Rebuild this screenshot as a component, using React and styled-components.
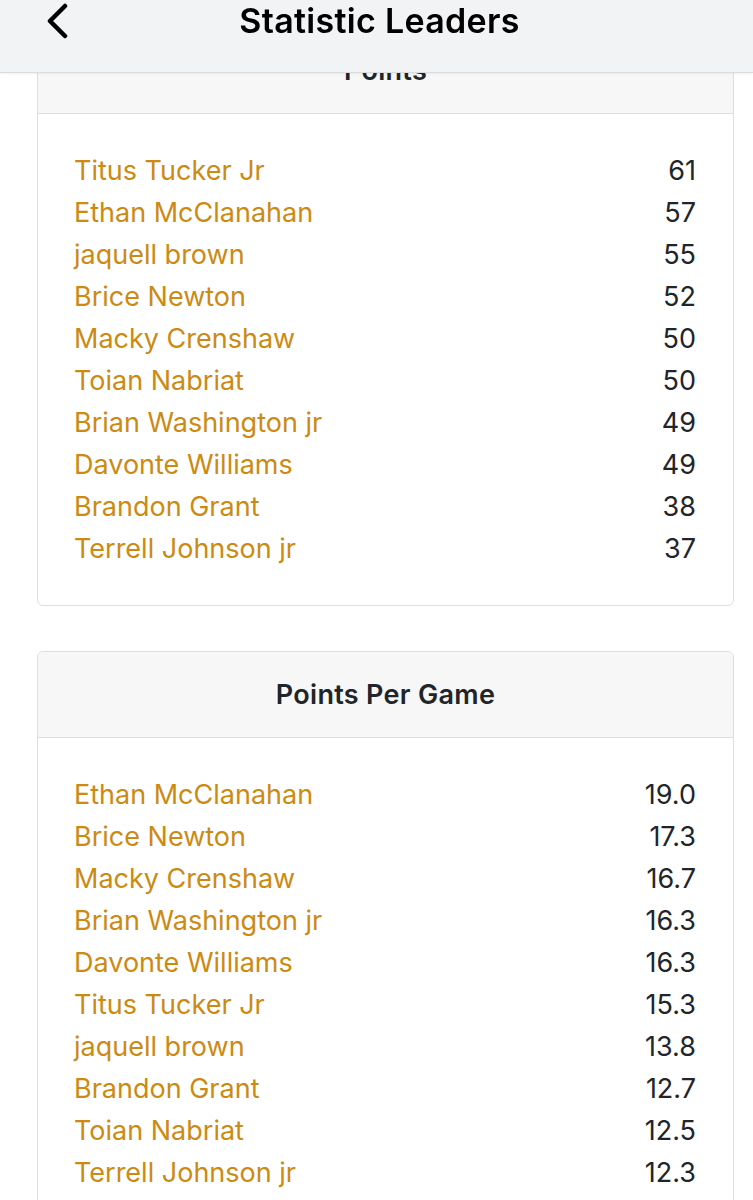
import React from 'react'
import styled, { createGlobalStyle } from 'styled-components'

const GlobalStyle = createGlobalStyle`
  html, body {
    margin: 0;
    padding: 0;
    background: #ffffff;
    font-family: Inter, "Noto Sans", sans-serif;
  }
`

const points = [
  ['Titus Tucker Jr', '61'],
  ['Ethan McClanahan', '57'],
  ['jaquell brown', '55'],
  ['Brice Newton', '52'],
  ['Macky Crenshaw', '50'],
  ['Toian Nabriat', '50'],
  ['Brian Washington jr', '49'],
  ['Davonte Williams', '49'],
  ['Brandon Grant', '38'],
  ['Terrell Johnson jr', '37'],
]

const ppg = [
  ['Ethan McClanahan', '19.0'],
  ['Brice Newton', '17.3'],
  ['Macky Crenshaw', '16.7'],
  ['Brian Washington jr', '16.3'],
  ['Davonte Williams', '16.3'],
  ['Titus Tucker Jr', '15.3'],
  ['jaquell brown', '13.8'],
  ['Brandon Grant', '12.7'],
  ['Toian Nabriat', '12.5'],
  ['Terrell Johnson jr', '12.3'],
]

function LeaderCard({ title, rows }) {
  return (
    <Card>
      <CardHeader>{title}</CardHeader>
      <CardBody>
        {rows.map(([name, value]) => (
          <Row key={name}>
            <Name href="#">{name}</Name>
            <Value>{value}</Value>
          </Row>
        ))}
      </CardBody>
    </Card>
  )
}

export default function App() {
  return (
    <>
      <GlobalStyle />
      <TopBar>
        <Back aria-label="Back">
          <svg width="26" height="36" viewBox="0 0 26 36" fill="none">
            <path
              d="M21 3 L6 18 L21 33"
              stroke="#000"
              strokeWidth="4.5"
              strokeLinecap="round"
              strokeLinejoin="round"
            />
          </svg>
        </Back>
        <Title>Statistic Leaders</Title>
      </TopBar>
      <Page>
        <LeaderCard title="Points" rows={points} />
        <LeaderCard title="Points Per Game" rows={ppg} />
      </Page>
    </>
  )
}

const TopBar = styled.header`
  position: fixed;
  top: 0;
  left: 0;
  right: 0;
  height: 72px;
  background: #f2f3f5;
  border-bottom: 1px solid #dcdcde;
  box-shadow: 0 1px 2px rgba(0, 0, 0, 0.06);
  z-index: 10;
  display: flex;
  justify-content: center;
  align-items: flex-start;
`

const Back = styled.button`
  position: absolute;
  left: 44px;
  top: 3px;
  border: none;
  background: none;
  padding: 0;
  display: flex;
`

const Title = styled.h1`
  margin: 0;
  padding-top: 0;
  margin-left: 6px;
  font-size: 34px;
  line-height: 42px;
  font-weight: 600;
  color: #000;
  letter-spacing: 0.3px;
`

const Page = styled.main`
  padding: 27px 19px 40px 37px;
  display: flex;
  flex-direction: column;
  gap: 45px;
`

const Card = styled.section`
  border: 1px solid #dedede;
  border-radius: 6px;
  background: #fff;
  overflow: hidden;
`

const CardHeader = styled.h2`
  margin: 0;
  height: 85px;
  display: flex;
  align-items: center;
  justify-content: center;
  background: #f7f7f7;
  border-bottom: 1px solid #dedede;
  font-size: 27px;
  font-weight: 600;
  letter-spacing: 0.3px;
  color: #212529;
`

const CardBody = styled.div`
  padding: 35px 37px 36px 36px;
`

const Row = styled.div`
  display: flex;
  justify-content: space-between;
  align-items: center;
  height: 42px;
  font-size: 27px;
`

const Name = styled.a`
  color: #cc8a12;
  text-decoration: none;
`

const Value = styled.span`
  color: #212529;
`
